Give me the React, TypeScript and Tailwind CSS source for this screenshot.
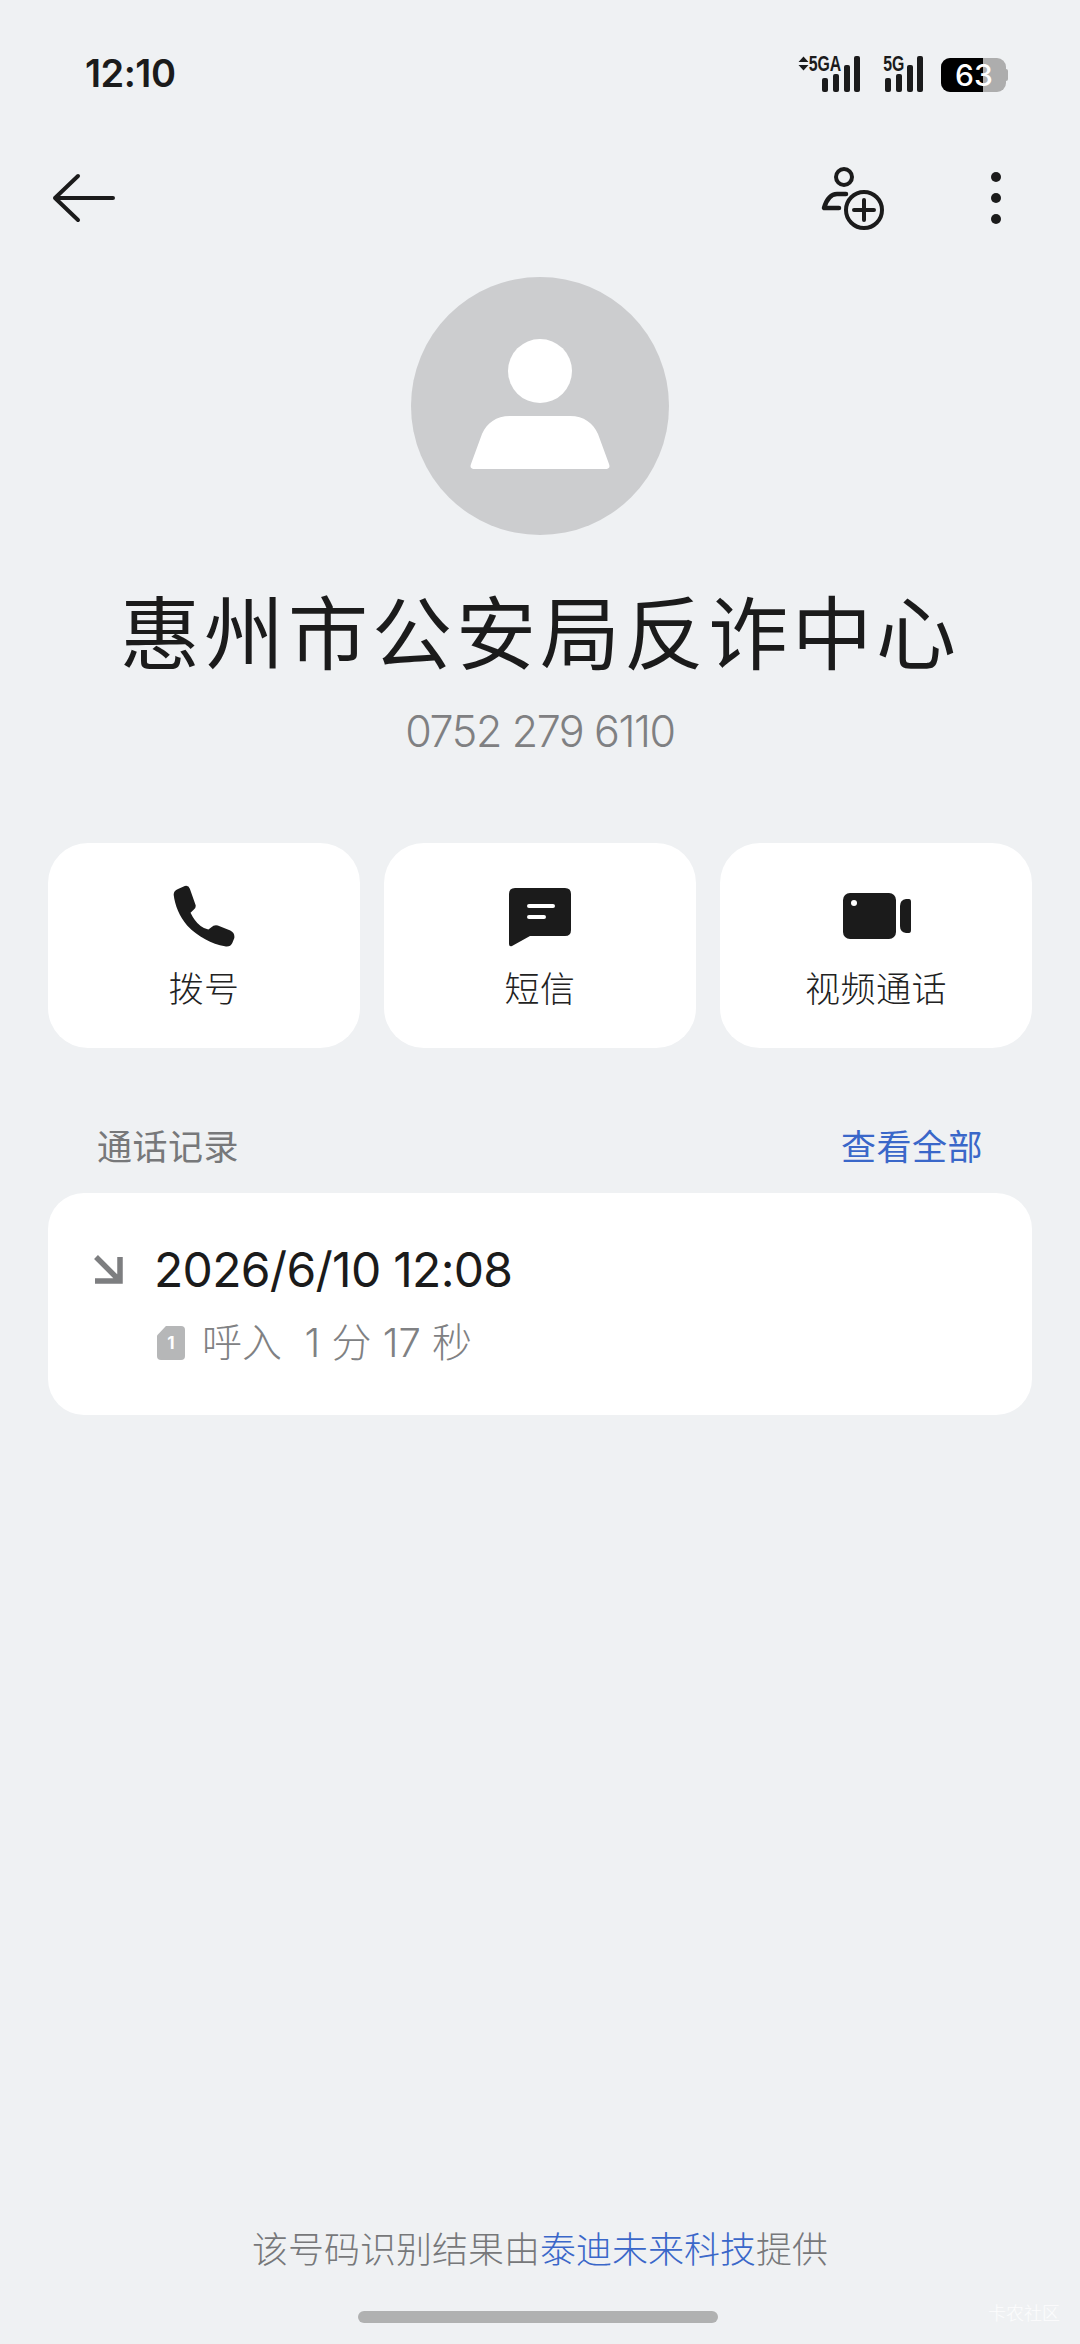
const sans = "[font-family:Inter,'Noto_Sans_CJK_SC',sans-serif]";

function Signal({ label, arrows }: { label: string; arrows?: boolean }) {
  return (
    <div className="relative h-[36px] w-[38px]">
      {arrows && (
        <svg width="11" height="15" viewBox="0 0 11 15" className="absolute left-[-24px] top-0">
          <path d="M5.5 0.5 L10.5 6 H0.5 Z M5.5 14.5 L10.5 9 H0.5 Z" fill="#1b1b1b" />
        </svg>
      )}
      <span className="absolute top-[-3px] right-[19px] text-[22px] leading-[22px] font-bold text-[#1b1b1b] whitespace-pre origin-right scale-x-[0.72] [font-family:'Liberation_Sans',sans-serif]">
        {label}
      </span>
      <svg width="38" height="36" viewBox="0 0 38 36">
        <rect x="0" y="22" width="6" height="14" rx="2" fill="#1b1b1b" />
        <rect x="11" y="18" width="6" height="18" rx="2" fill="#1b1b1b" />
        <rect x="22" y="9" width="6" height="27" rx="2" fill="#1b1b1b" />
        <rect x="32" y="0" width="6" height="36" rx="2" fill="#1b1b1b" />
      </svg>
    </div>
  );
}

function ActionCard({ label, children }: { label: string; children: React.ReactNode }) {
  return (
    <div className="flex-1 h-[205px] bg-white rounded-[40px] flex flex-col items-center pt-[40px]">
      <div className="h-[66px] flex items-center justify-center">{children}</div>
      <div className="mt-[15px] text-[35px] leading-[50px] text-[#222222] font-light tracking-[0.5px]">{label}</div>
    </div>
  );
}

export default function App() {
  return (
    <div className={`relative h-[2344px] w-[1080px] overflow-hidden bg-[#eff1f3] flex flex-col ${sans}`}>
      {/* status bar */}
      <div className="h-[146px] flex items-center justify-between pl-[85px] pr-[72px]">
        <span className="text-[38px] font-semibold text-[#1b1b1b] tracking-[-0.5px]">12:10</span>
        <div className="flex items-end pt-[1px]">
          <Signal label="5GA" arrows />
          <div className="ml-[25px]">
            <Signal label="5G" />
          </div>
          <div className="ml-[18px] flex items-center">
            <div className="relative h-[34px] w-[65px] rounded-[9px] bg-[#adadad] overflow-hidden flex">
              <div className="w-[42px] h-full bg-black" />
              <span className="absolute left-[14px] top-0 leading-[34px] text-[30px] font-medium text-white">63</span>
            </div>
            <div className="h-[12px] w-[2px] rounded-r bg-[#adadad]" />
          </div>
        </div>
      </div>

      {/* nav */}
      <div className="h-[104px] flex items-center justify-between pl-[52px] pr-[79px]">
        <svg width="64" height="50" viewBox="0 0 64 50" fill="none" stroke="#1b1b1b" strokeWidth="4" strokeLinecap="round" strokeLinejoin="round">
          <path d="M3 25 H61 M26 3 L3 25 L26 47" />
        </svg>
        <div className="flex items-center gap-[105px]">
          <svg width="66" height="66" viewBox="0 0 66 66" fill="none" stroke="#1b1b1b" strokeLinecap="round">
            <circle cx="24" cy="12" r="8" strokeWidth="4" />
            <path d="M26 29 H17 C12 29 7 33 4 43 H19" strokeWidth="4.5" strokeLinejoin="round" />
            <circle cx="44" cy="45" r="18" strokeWidth="4" />
            <path d="M34 45 H54 M44 35 V55" strokeWidth="4" />
          </svg>
          <svg width="10" height="52" viewBox="0 0 10 52" fill="#1b1b1b">
            <circle cx="5" cy="5" r="5" />
            <circle cx="5" cy="26" r="5" />
            <circle cx="5" cy="47" r="5" />
          </svg>
        </div>
      </div>

      {/* avatar */}
      <div className="mt-[27px] flex justify-center">
        <div className="w-[258px] h-[258px] rounded-full bg-[#cccdcf] flex items-center justify-center">
          <svg width="257" height="257" viewBox="0 0 257 257" fill="#ffffff">
            <circle cx="128" cy="93" r="32" />
            <path d="M98 138 H158 C172 138 181 145 186 156 L197 186 Q199 191 193 191 H63 Q57 191 59 186 L70 156 C75 145 84 138 98 138 Z" />
          </svg>
        </div>
      </div>

      {/* name */}
      <div className="mt-[49px] text-center text-[80px] leading-[100px] font-normal tracking-[4px] text-[#1b1b1b]">惠州市公安局反诈中心</div>
      <div className="mt-[17px] text-center text-[43px] leading-[60px] font-light tracking-[-1.4px] text-[#7f8082]">0752 279 6110</div>

      {/* actions */}
      <div className="mt-[82px] px-[48px] flex gap-[24px]">
        <ActionCard label="拨号">
          <svg width="62" height="62" viewBox="430 163 184 184" fill="#1b1b1b">
            <path d="M445 175 L465 166 Q476 163 480 174 L497 222 Q499 230 492 236 L482 245 Q494 270 512 285 Q522 293 535 295 L550 284 Q556 281 563 283 L600 298 Q614 305 612 320 L606 335 Q600 348 584 345 C545 337 505 318 472 283 C450 258 435 222 432 192 Q432 180 445 175 Z" />
          </svg>
        </ActionCard>
        <ActionCard label="短信">
          <svg width="62" height="60" viewBox="0 0 62 60" fill="none" className="mt-[2px]">
            <path d="M6 1 H56 Q62 1 62 7 V43 Q62 49 56 49 H21 L3 59 Q0 60 0 57 V7 Q0 1 6 1 Z" fill="#1b1b1b" />
            <path d="M20 19 H44 M20 30 H35" stroke="#ffffff" strokeWidth="4" strokeLinecap="round" />
          </svg>
        </ActionCard>
        <ActionCard label="视频通话">
          <svg width="68" height="46" viewBox="0 0 68 46" fill="#1b1b1b" className="ml-[2px]">
            <rect x="0" y="0" width="53" height="46" rx="7" />
            <path d="M57 13 Q57 7 63 6 L66 6 Q68 6 68 9 V37 Q68 40 66 40 L63 40 Q57 39 57 33 Z" />
            <circle cx="11" cy="10" r="3" fill="#ffffff" />
          </svg>
        </ActionCard>
      </div>

      {/* section header */}
      <div className="mt-[74px] h-[50px] pl-[97px] pr-[97px] flex items-center justify-between text-[35px] tracking-[0.5px] font-normal">
        <span className="text-[#77787a]">通话记录</span>
        <span className="text-[#3a67c9]">查看全部</span>
      </div>

      {/* call record */}
      <div className="mt-[21px] mx-[48px] h-[222px] bg-white rounded-[36px] flex pl-[45px] pt-[45px]">
        <svg width="30" height="30" viewBox="0 0 30 30" fill="none" stroke="#7d7e80" strokeWidth="5.5" className="mt-[16px]">
          <path d="M3 3 L26 26 M2 27 H27 V3" />
        </svg>
        <div className="ml-[34px]">
          <div className="-ml-[3px] text-[48px] leading-[64px] font-normal tracking-[-0.7px] text-[#1b1b1b] whitespace-pre">2026/6/10 12:08</div>
          <div className="mt-[15px] flex items-center h-[52px]">
            <div className="relative w-[28px] h-[34px] bg-[#b6b7b8] rounded-[4px] [clip-path:polygon(32%_0,100%_0,100%_100%,0_100%,0_28%)] flex items-center justify-center text-[17px] font-bold text-white leading-none">1</div>
            <span className="ml-[17px] text-[40px] leading-[52px] font-light text-[#808183] whitespace-pre">呼入  1 分 17 秒</span>
          </div>
        </div>
      </div>

      {/* footer */}
      <div className="mt-auto text-center text-[36px] leading-[50px] font-light text-[#77787a] translate-y-[2px]">
        该号码识别结果由<span className="text-[#3a67c9]">泰迪未来科技</span>提供
      </div>
      <div className="mt-[38px] mb-[21px] ml-[358px] w-[360px] h-[12px] rounded-full bg-[#b0b1b1]" />

      <div className="absolute right-[20px] bottom-[20px] text-[18px] leading-[20px] text-white/80 font-light">卡农社区</div>
    </div>
  );
}
